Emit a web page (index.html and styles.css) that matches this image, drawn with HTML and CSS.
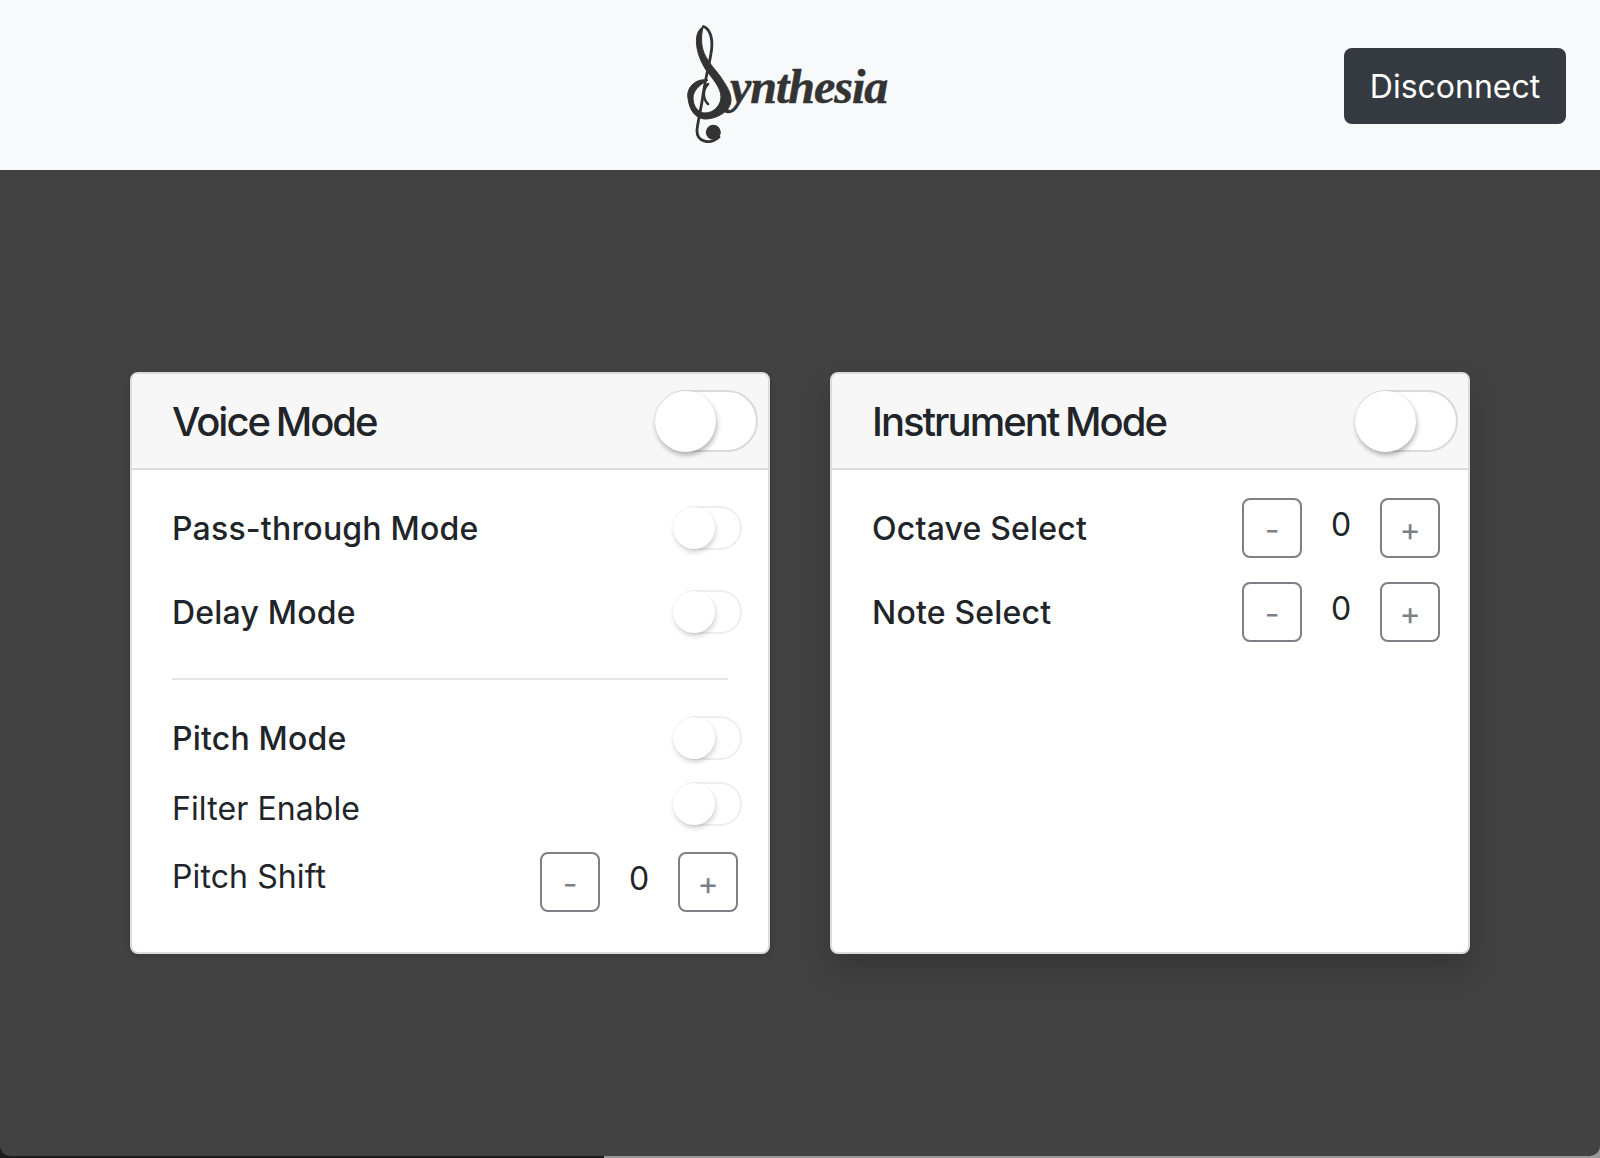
FILE: index.html
```html
<!DOCTYPE html>
<html lang="en">
  <head>
    <meta charset="UTF-8" />
    <meta name="viewport" content="width=device-width, initial-scale=1.0" />
    <title>Synthesia</title>
    <link rel="stylesheet" href="styles.css">
  </head>
  <body>
    <header class="topbar">
      <svg class="logo" viewBox="0 0 260 170" role="img" aria-label="Synthesia">
        <g class="clef">
          <path class="clef-body" d="M43.5 26.5C38 29 36 36 36.5 43C37 53 41 62 46 70C51 77 61 87 61 97C61 105 54 113 45 113C38 113 33 106 33 98C33 91 39 85 48 80C41 79 36 81 32 85C29 88 27 93 28 98C29 110 36 119 45 119C57 119 71 111 71 100C71 92 66 85 60 76C54 68 46 60 43 50C41 43 41 33 43.5 26.5Z" />
          <path class="clef-thin" d="M43.5 26.5C50 29 53 38 51.5 50C50 62 46 75 43 95C41 110 37 125 37 131C37 142 50 145 59 137" />
          <path class="clef-mid" d="M48 84C43 89 42 98 48 104" />
          <circle class="clef-dot" cx="53.3" cy="132.3" r="7.5" />
        </g>
        <text class="wordmark" x="70" y="103">ynthesia</text>
      </svg>
      <button class="btn-disconnect">Disconnect</button>
    </header>

    <main class="stage">
      <section class="card">
        <div class="card-header">
          <h2>Voice Mode</h2>
          <span class="switch switch-lg"><span class="knob"></span></span>
        </div>
        <div class="card-body">
          <div class="row row-tall">
            <span class="label">Pass-through Mode</span>
            <span class="switch"><span class="knob"></span></span>
          </div>
          <div class="row row-tall">
            <span class="label">Delay Mode</span>
            <span class="switch"><span class="knob"></span></span>
          </div>
          <hr class="divider" />
          <div class="row row-mid">
            <span class="label">Pitch Mode</span>
            <span class="switch"><span class="knob"></span></span>
          </div>
          <div class="row row-short">
            <span class="label label-light">Filter Enable</span>
            <span class="switch"><span class="knob"></span></span>
          </div>
          <div class="row row-stepper">
            <span class="label label-light">Pitch Shift</span>
            <div class="stepper">
              <button class="step">-</button>
              <span class="value">0</span>
              <button class="step">+</button>
            </div>
          </div>
        </div>
      </section>

      <section class="card card-raised">
        <div class="card-header">
          <h2>Instrument Mode</h2>
          <span class="switch switch-lg"><span class="knob"></span></span>
        </div>
        <div class="card-body">
          <div class="row row-tall">
            <span class="label">Octave Select</span>
            <div class="stepper">
              <button class="step">-</button>
              <span class="value">0</span>
              <button class="step">+</button>
            </div>
          </div>
          <div class="row row-tall">
            <span class="label">Note Select</span>
            <div class="stepper">
              <button class="step">-</button>
              <span class="value">0</span>
              <button class="step">+</button>
            </div>
          </div>
        </div>
      </section>
    </main>
  </body>
</html>
```

FILE: styles.css
```css
:root {
  --ink: #212529;
  --line: #dcdcdc;
  --stage: #424242;
  --muted: #7b8187;
}

html,
body {
  margin: 0;
  padding: 0;
  height: 100%;
}

/* the strip under the stage is the window edge, dark then light */
body {
  font-family: Inter, "Noto Sans", sans-serif;
  color: var(--ink);
  background: linear-gradient(90deg, #1c1c1c 604px, #999 604px);
  display: flex;
  flex-direction: column;
  overflow: hidden;
}

.topbar {
  height: 170px;
  flex: none;
  background-color: #f8f9fa;
  display: flex;
  align-items: center;
  justify-content: flex-end;
  padding-right: 34px;
  position: relative;
}

.logo {
  position: absolute;
  left: 660px;
  top: 0;
  width: 260px;
  height: 170px;
}

.clef-body {
  fill: #333;
  stroke: #333;
  stroke-width: 1;
}

.clef-dot {
  fill: #333;
}

.clef-thin,
.clef-mid {
  fill: none;
  stroke: #333;
  stroke-linecap: round;
}

.clef-thin {
  stroke-width: 2.8;
}

.clef-mid {
  stroke-width: 2.5;
}

.wordmark {
  font-family: "Liberation Serif", serif;
  font-style: italic;
  font-weight: 700;
  font-size: 48px;
  letter-spacing: -1px;
  fill: #333;
  stroke: #333;
  stroke-width: 0.5px;
}

.btn-disconnect {
  width: 222px;
  height: 76px;
  margin-top: 2px;
  border: none;
  border-radius: 8px;
  background-color: #343a40;
  color: white;
  font-family: inherit;
  font-size: 32px;
}

.stage {
  flex: 1;
  display: flex;
  justify-content: center;
  gap: 60px;
  padding-top: 202px;
  margin-bottom: 2px;
  background-color: var(--stage);
  border-radius: 0 0 10px 10px;
}

.card {
  width: 640px;
  height: 582px;
  box-sizing: border-box;
  background-color: white;
  border: 2px solid var(--line);
  border-radius: 8px;
  box-shadow: 0 2px 6px rgba(0, 0, 0, 0.15);
}

.card-raised {
  box-shadow: 0 16px 32px rgba(0, 0, 0, 0.2);
}

.card-raised .stepper {
  margin-right: 2px;
}

.card-header {
  height: 94px;
  display: flex;
  align-items: center;
  justify-content: space-between;
  padding: 0 10px 0 40px;
  background-color: #f7f7f7;
  border-bottom: 2px solid var(--line);
  border-radius: 6px 6px 0 0;
}

.card-header h2 {
  margin: 0;
  font-size: 40px;
  font-weight: 500;
  letter-spacing: -2px;
  word-spacing: -2px;
}

.card-body {
  padding: 28px 26px 0 40px;
}

.label {
  font-size: 32px;
  font-weight: 500;
  letter-spacing: 0.2px;
}

.label-light {
  font-weight: 400;
  letter-spacing: 0.1px;
}

.row {
  display: flex;
  align-items: center;
  justify-content: space-between;
}

.row-tall {
  height: 60px;
  margin-bottom: 24px;
}

.row-mid {
  height: 44px;
  margin-bottom: 22px;
}

.row-short {
  height: 44px;
  margin-bottom: 26px;
}

.row-short .label {
  margin-top: 8px;
}

.row-stepper {
  height: 60px;
  align-items: flex-start;
}

.row-stepper .label {
  margin-top: 5px;
}

.divider {
  border: none;
  border-top: 2px solid #e6e6e6;
  margin: 36px 14px 36px 0;
}

.switch {
  width: 69px;
  height: 44px;
  box-sizing: border-box;
  border: 2px solid #eee;
  border-radius: 22px;
  background-color: white;
  position: relative;
  flex: none;
}

.knob {
  position: absolute;
  left: -2px;
  top: -1px;
  width: 42px;
  height: 42px;
  border-radius: 50%;
  background-color: white;
  box-shadow: 1px 3px 5px rgba(0, 0, 0, 0.18);
}

.switch-lg {
  width: 103px;
  height: 62px;
  border-radius: 31px;
  border-color: #dadada;
}

.switch-lg .knob {
  width: 61px;
  height: 61px;
  box-shadow: 1px 3px 5px rgba(0, 0, 0, 0.3);
}

.stepper {
  display: flex;
  align-items: flex-start;
  margin-right: 4px;
}

.step {
  width: 60px;
  height: 60px;
  padding: 2px 0 0;
  box-sizing: border-box;
  border: 2px solid var(--muted);
  border-radius: 8px;
  background-color: white;
  color: var(--muted);
  font-family: inherit;
  font-size: 32px;
}

.value {
  width: 78px;
  text-align: center;
  font-size: 32px;
  line-height: 54px;
}
```
